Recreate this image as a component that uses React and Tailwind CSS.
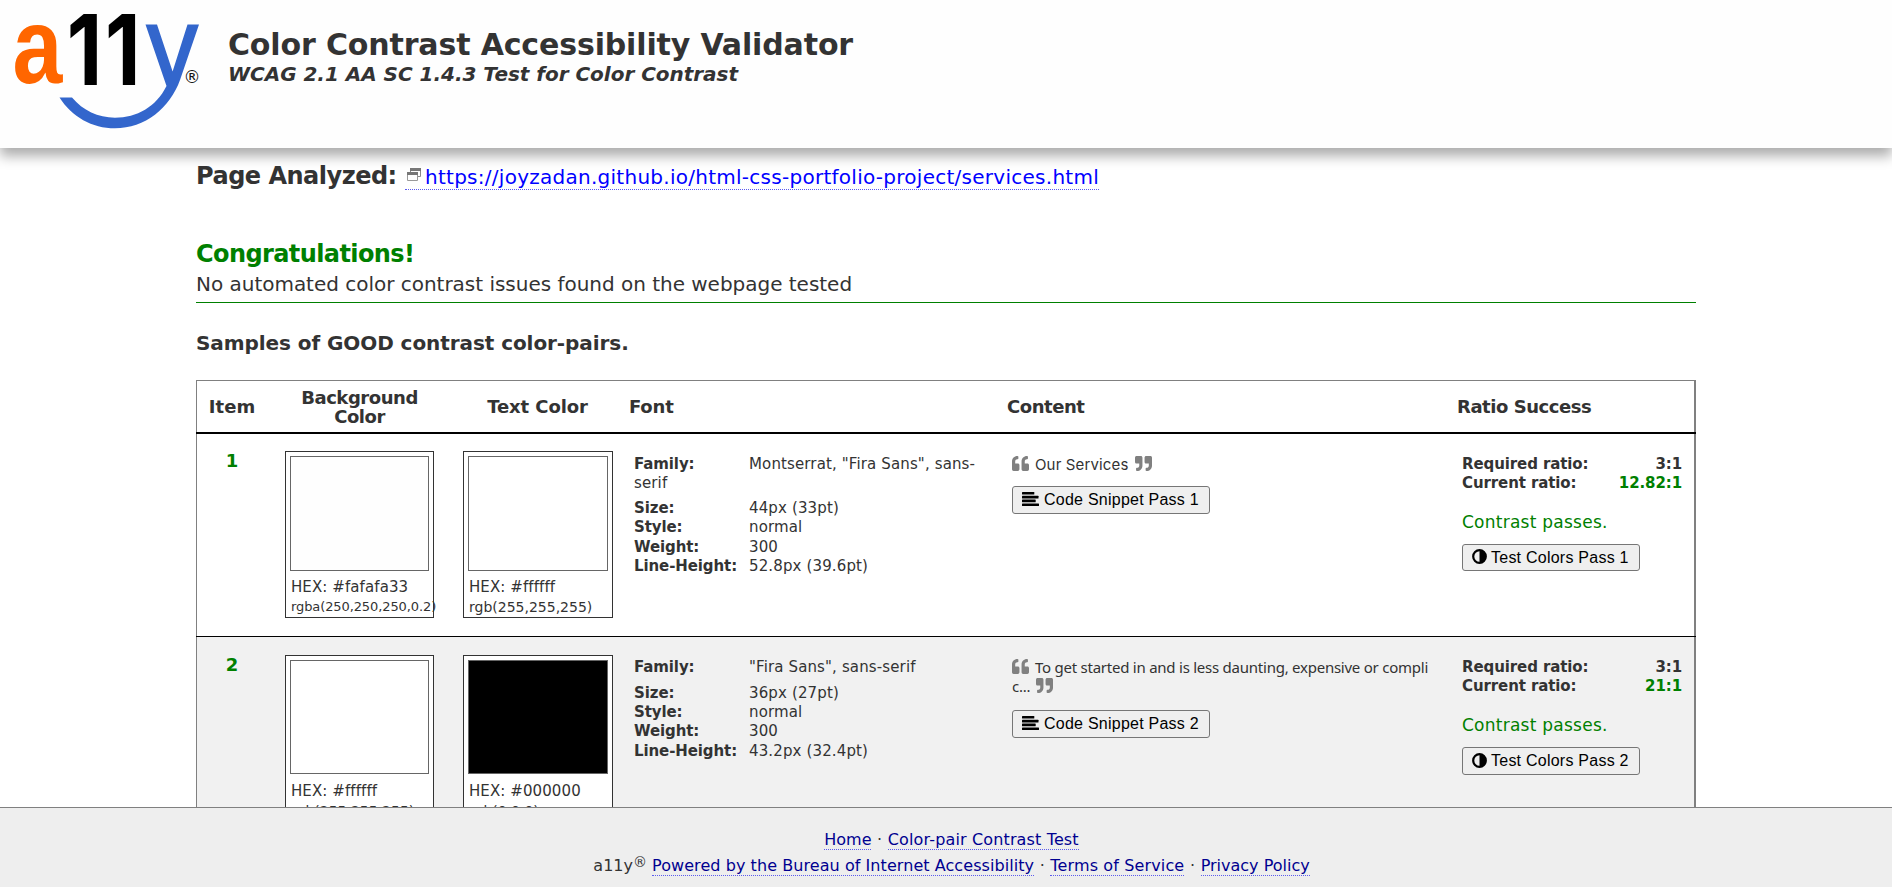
import React from "react";
import { FaQuoteLeft, FaQuoteRight } from "react-icons/fa";

const COLS = "grid grid-cols-[70px_186px_169px_378px_450px_244px]";

function Logo() {
  return (
    <svg width="228" height="148" viewBox="0 0 228 148" className="shrink-0 overflow-visible">
      <g fontFamily="Liberation Sans, sans-serif" fontWeight="700" fill="#ff6600">
        <text transform="translate(12.4 83.3) scale(.83 1)" fontSize="108">a</text>
      </g>
      <g fontFamily="Inter, sans-serif" fontWeight="700" fill="#000">
        <text transform="translate(66.8 84.5) scale(.84 1)" fontSize="98">1</text>
        <text transform="translate(105 84.5) scale(.84 1)" fontSize="98">1</text>
      </g>
      <path
        fill="#3366cc"
        d="M145.5 24.5H157L172.6 71.5L187.5 24.5H199L180 80C170 108 145 128.3 115 128.3C92 128.3 72 117 59.5 97.5H72C83 110.500 98 117.700 115 117.700C137 117.700 156 107 166.500 86Z"
      />
      <text x="183.5" y="83" fontSize="17" fontFamily="DejaVu Sans, sans-serif" fill="#111">®</text>
    </svg>
  );
}

function WindowIcon() {
  return (
    <svg width="20" height="14" viewBox="0 0 20 14" className="inline-block align-[2px]">
      <path d="M5.500 4V.5h10v8h-3" fill="none" stroke="#8a8a8a" />
      <path d="M5 0h11v3H5z" fill="#777" />
      <path d="M2.500 5.500h10v7h-10z" fill="#fff" stroke="#999" />
      <path d="M2 4h11v3H2z" fill="#777" />
    </svg>
  );
}

function AlignIcon() {
  return (
    <svg width="17" height="14" viewBox="0 0 17 14" className="mb-0.5 shrink-0">
      <rect width="12.300" height="2.600" rx=".5" />
      <rect y="3.800" width="16.500" height="2.600" rx=".5" />
      <rect y="7.600" width="13.700" height="2.600" rx=".5" />
      <rect y="11.400" width="17" height="2.600" rx=".5" />
    </svg>
  );
}

function ContrastIcon() {
  return (
    <svg width="15" height="15" viewBox="0 0 15 15" className="mb-0.5 shrink-0">
      <circle cx="7.500" cy="7.500" r="6.300" fill="none" stroke="#000" strokeWidth="2.200" />
      <path d="M7.500 1a6.500 6.500 0 0 1 0 13z" />
    </svg>
  );
}

function Swatch({ box, inner, hex, rgb, rgbClass }) {
  return (
    <div className={`h-[167px] border border-[#333] bg-white p-1 ${box}`}>
      <div className={`border border-[#666] ${inner}`} />
      <div className="mt-1.5 pl-px text-[15px] leading-5 whitespace-nowrap">
        <div className="tracking-[0.09px]">HEX: {hex}</div>
        <div className={rgbClass}>{rgb}</div>
      </div>
    </div>
  );
}

function Prop({ label, children }) {
  return (
    <div>
      <b className="inline-block w-[115px] tracking-[-0.1px]">{label}</b>
      {children}
    </div>
  );
}

const BTN =
  "flex items-center rounded-[3px] border border-[#767676] bg-[#efefef] pl-[9px] font-['Liberation_Sans',sans-serif] text-[16px] text-black whitespace-nowrap";

const rows = [
  {
    n: 1,
    row: "h-[202px] bg-white pt-[17px]",
    top: "pt-[3.5px]",
    sizeGap: "h-[6px]",
    bg: { hex: "#fafafa33", rgb: "rgba(250,250,250,0.2)", inner: "h-[115px] bg-[#fefefe]", rgbClass: "text-[13px] tracking-[-0.1px]" },
    fg: { hex: "#ffffff", rgb: "rgb(255,255,255)", inner: "h-[115px] bg-white", rgbClass: "text-[14px]" },
    family: 'Montserrat, "Fira Sans", sans-serif',
    size: "44px (33pt)",
    lh: "52.8px (39.6pt)",
    font: "font-[Inter] tracking-[0.15px]",
    text: "Our Services",
    gap: "mt-3",
    ratio: "12.82:1",
    btn: "h-[27px] mt-3",
  },
  {
    n: 2,
    row: "h-[204px] bg-[#f1f1f1] pt-[18px]",
    top: "pt-[2.5px]",
    sizeGap: "h-[7px]",
    bg: { hex: "#ffffff", rgb: "rgb(255,255,255)", inner: "h-[114px] mb-[7px] bg-white", rgbClass: "text-[14px]" },
    fg: { hex: "#000000", rgb: "rgb(0,0,0)", inner: "h-[114px] mb-[7px] bg-black", rgbClass: "text-[14px]" },
    family: '"Fira Sans", sans-serif',
    size: "36px (27pt)",
    lh: "43.2px (32.4pt)",
    font: "font-['Noto_Sans'] tracking-[-0.242px]",
    text: "To get started in and is less daunting, expensive or complic...",
    gap: "mt-[14px]",
    ratio: "21:1",
    btn: "h-[28px] mt-3",
  },
];

function Row({ r }) {
  return (
    <div className={`${COLS} border-l border-r-2 border-[#808080] ${r.row}`}>
      <div className="text-center text-[18px] leading-5 font-bold text-[#008000]">{r.n}</div>
      <div>
        <Swatch box="ml-[18px] w-[149px]" {...r.bg} />
      </div>
      <div>
        <Swatch box="ml-[10px] w-[150px]" {...r.fg} />
      </div>
      <div className={`pr-[18px] pl-3 text-[15px] leading-[19.3px] tracking-[0.13px] ${r.top}`}>
        <Prop label="Family:">{r.family}</Prop>
        <div className={r.sizeGap} />
        <Prop label="Size:">{r.size}</Prop>
        <Prop label="Style:">normal</Prop>
        <Prop label="Weight:">300</Prop>
        <Prop label="Line-Height:">{r.lh}</Prop>
      </div>
      <div className={`pr-5 pl-3 ${r.top}`}>
        <div className={`text-[15px] leading-[19.3px] break-all ${r.font}`}>
          <FaQuoteLeft className="mr-1.5 inline-block size-[17px] align-[-2px] text-[#808080]" />
          {r.text}
          <FaQuoteRight className="ml-1.5 inline-block size-[17px] align-[-2px] text-[#808080]" />
        </div>
        <button className={`${BTN} ${r.gap} h-[28px] w-[198px] gap-[5px] tracking-[0.24px]`}>
          <AlignIcon />
          Code Snippet Pass {r.n}
        </button>
      </div>
      <div className={`pr-3 pl-3 ${r.top}`}>
        <div className="text-[15px] leading-[19.3px] font-bold tracking-[-0.1px]">
          <div className="flex justify-between">
            <span>Required ratio:</span>
            <span>3:1</span>
          </div>
          <div className="flex justify-between">
            <span>Current ratio:</span>
            <span className="text-[#008000]">{r.ratio}</span>
          </div>
        </div>
        <div className="mt-[19px] text-[17px] leading-5 tracking-[0.25px] text-[#008000]">Contrast passes.</div>
        <button className={`${BTN} ${r.btn} w-[178px] gap-1 tracking-[0.24px]`}>
          <ContrastIcon />
          Test Colors Pass {r.n}
        </button>
      </div>
    </div>
  );
}

function FooterLink({ className = "", children }) {
  return (
    <a href="#" className={`border-b border-dotted border-[#5c5cee] text-[#000090] ${className}`}>
      {children}
    </a>
  );
}

export default function App() {
  return (
    <div className="flex h-[887px] flex-col overflow-hidden bg-white font-['DejaVu_Sans',Verdana,sans-serif] text-[#333]">
      <header className="relative z-10 flex h-[148px] shrink-0 bg-[#fefefe] shadow-[0_8px_12px_rgba(0,0,0,0.33)]">
        <Logo />
        <div className="pt-[27px] font-bold whitespace-nowrap">
          <h1 className="text-[30px] leading-9 tracking-[-0.142px]">Color Contrast Accessibility Validator</h1>
          <p className="text-[20px] leading-[22px] tracking-[-0.024px] italic">WCAG 2.1 AA SC 1.4.3 Test for Color Contrast</p>
        </div>
      </header>

      <main className="mx-auto min-h-0 w-[1500px] flex-1 overflow-hidden pt-2.5">
        <div className="flex h-9 items-baseline text-[20px] leading-9 whitespace-nowrap">
          <h2 className="w-[209px] text-[24px] font-bold tracking-[-0.5px]">Page Analyzed:</h2>
          <a href="#" className="relative z-20 border-b border-dotted border-[#5c5cee] leading-6 tracking-[0.265px] text-[#0000ff]">
            <WindowIcon />
            https://joyzadan.github.io/html-css-portfolio-project/services.html
          </a>
        </div>

        <section className="mt-[45px] border-b border-[#008000] pb-[3px]">
          <h2 className="text-[24px] leading-[30px] font-bold tracking-[-0.6px] text-[#008000]">Congratulations!</h2>
          <p className="text-[20px] leading-[30px] tracking-[-0.02px]">No automated color contrast issues found on the webpage tested</p>
        </section>

        <h3 className="mt-7 text-[20px] leading-6 font-bold tracking-[-0.07px]">Samples of GOOD contrast color-pairs.</h3>

        <div className="mt-[25px]">
          <div className={`${COLS} h-[52px] items-center border-t border-r-2 border-l border-[#808080] text-[18px] leading-[19px] font-bold tracking-[-0.45px]`}>
            <div className="text-center tracking-[0.1px]">Item</div>
            <div className="pr-px text-center">
              Background
              <br />
              Color
            </div>
            <div className="text-center tracking-[-0.1px]">Text Color</div>
            <div className="pl-[7px] tracking-[-0.2px]">Font</div>
            <div className="pl-[7px]">Content</div>
            <div className="pl-[7px]">Ratio Success</div>
          </div>
          <div className="h-0.5 bg-black" />
          <Row r={rows[0]} />
          <div className="h-px bg-black" />
          <Row r={rows[1]} />
        </div>
      </main>

      <footer className="h-20 shrink-0 border-t border-[#808080] bg-[#eee] pt-[18.5px] pl-[11px] text-center text-[16px] leading-[26px]">
        <div>
          <FooterLink>Home</FooterLink>
          <span className="mx-[0.5px]"> · </span>
          <FooterLink className="tracking-[0.144px]">Color-pair Contrast Test</FooterLink>
        </div>
        <div>
          a11y<span className="inline-block align-[4px] text-[14px] leading-none">®</span>{" "}
          <FooterLink className="tracking-[0.065px]">Powered by the Bureau of Internet Accessibility</FooterLink>
          <span className="mx-[0.5px]"> · </span>
          <FooterLink className="tracking-[0.135px]">Terms of Service</FooterLink>
          <span className="mx-[0.5px]"> · </span>
          <FooterLink>Privacy Policy</FooterLink>
        </div>
      </footer>
    </div>
  );
}
